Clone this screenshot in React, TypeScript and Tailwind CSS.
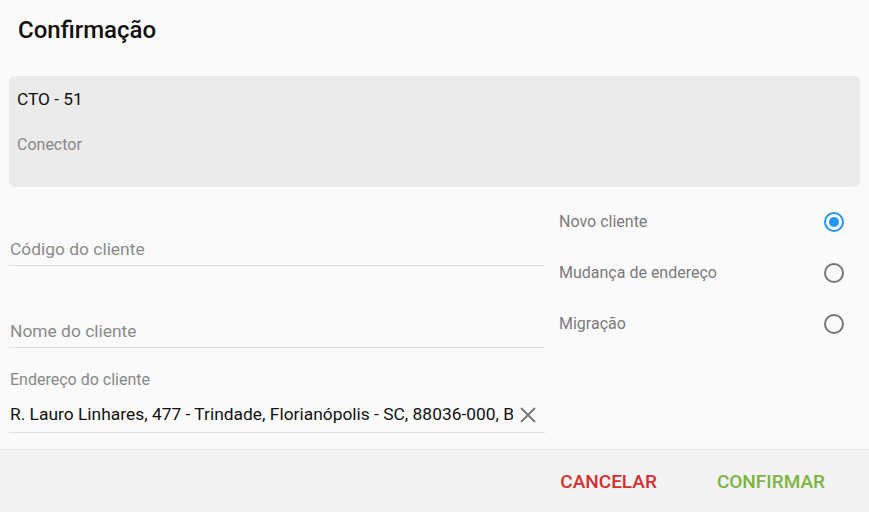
import React from "react";

function Radio({ checked }: { checked?: boolean }) {
  return checked ? (
    <div className="w-[20px] h-[20px] rounded-full border-2 border-[#2196f3] flex items-center justify-center">
      <div className="w-[10px] h-[10px] rounded-full bg-[#2196f3]" />
    </div>
  ) : (
    <div className="w-[20px] h-[20px] rounded-full border-2 border-[#757575]" />
  );
}

export default function App() {
  return (
    <div className="w-[869px] h-[512px] bg-[#fafafa] flex flex-col font-['Roboto',sans-serif] overflow-hidden">
      <div className="px-[18px] pt-[15px] h-[76px]">
        <h1 className="text-[24px] font-medium text-[#111] leading-[30px]">Confirmação</h1>
      </div>
      <div className="mx-[9px] h-[111px] rounded-[6px] bg-[#ebebeb] px-[8px] pt-[11px]">
        <div className="text-[17.3px] text-[#111] leading-[24px]">CTO - 51</div>
        <div className="mt-[24px] text-[16px] text-[#888] leading-[20px]">Conector</div>
      </div>
      <div className="flex flex-1 px-[9px]">
        <div className="w-[536px] flex flex-col">
          <div className="mt-[36px] h-[43px] border-b border-[#e0e0e0] flex items-center pt-[10px] pl-[1px] text-[17.4px] text-[#8a8a8a]">
            Código do cliente
          </div>
          <div className="mt-[39px] h-[43px] border-b border-[#e0e0e0] flex items-center pt-[10px] pl-[1px] text-[17.4px] text-[#8a8a8a]">
            Nome do cliente
          </div>
          <div className="mt-[22px] pl-[1px] text-[16px] text-[#888] leading-[20px]">Endereço do cliente</div>
          <div className="mt-[7px] h-[36px] border-b border-[#e0e0e0] flex items-center pl-[1px]">
            <div className="flex-1 overflow-hidden whitespace-nowrap text-[17.4px] text-[#111]">
              R. Lauro Linhares, 477 - Trindade, Florianópolis - SC, 88036-000, Brasil
            </div>
            <svg width="24" height="24" viewBox="0 0 24 24" className="ml-[3px] mr-[5px] shrink-0">
              <path d="M5 5 L19 19 M19 5 L5 19" stroke="#757575" strokeWidth="1.8" />
            </svg>
          </div>
        </div>
        <div className="flex-1 pl-[14px] pr-[16px] pt-[25px] flex flex-col gap-[31px]">
          {[
            ["Novo cliente", true],
            ["Mudança de endereço", false],
            ["Migração", false],
          ].map(([label, checked]) => (
            <div key={label as string} className="flex items-center justify-between h-[20px]">
              <span className="text-[16px] text-[#7a7a7a]">{label as string}</span>
              <Radio checked={checked as boolean} />
            </div>
          ))}
        </div>
      </div>
      <div className="h-[63px] bg-[#f3f3f3] border-t border-[#ededed] flex items-center justify-end pr-[44px] gap-[60px] pt-[2px]">
        <span className="text-[19px] font-medium text-[#d32f2f]">CANCELAR</span>
        <span className="text-[19px] font-medium text-[#7cb342]">CONFIRMAR</span>
      </div>
    </div>
  );
}
